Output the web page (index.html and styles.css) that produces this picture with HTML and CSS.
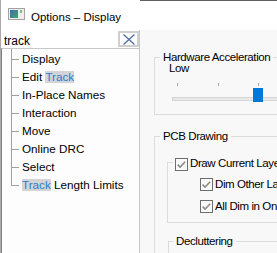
FILE: index.html
```html
<!DOCTYPE html>
<html>
<head>
<meta charset="utf-8">
<link rel="stylesheet" href="styles.css">
</head>
<body>
<div class="window">
  <div class="titlebar">
    <svg class="app-icon" width="17" height="12" viewBox="0 0 17 12">
      <defs>
        <linearGradient id="g" x1="0" y1="0" x2="1" y2="1">
          <stop offset="0" stop-color="#3d6db3"/>
          <stop offset="1" stop-color="#45a66c"/>
        </linearGradient>
      </defs>
      <rect x="0.5" y="0.5" width="16" height="11" fill="#eeeeee" stroke="#a3a3a3"/>
      <rect x="2" y="2" width="8" height="8" fill="url(#g)"/>
      <rect x="12" y="2" width="2" height="3" fill="#7cc07c"/>
    </svg>
    <span class="title">Options – Display</span>
  </div>
  <div class="main">
    <div class="left">
      <div class="search">
        <span class="search-text">track</span>
        <span class="clear">
          <svg width="12" height="11" viewBox="0 0 12 11"><path d="M0.5 0.5 L11.5 10.5 M11.5 0.5 L0.5 10.5" stroke="#4d6fa3" stroke-width="1.3" fill="none"/></svg>
        </span>
      </div>
      <ul class="tree">
        <li>Display</li>
        <li>Edit <mark>Track</mark></li>
        <li>In-Place Names</li>
        <li>Interaction</li>
        <li>Move</li>
        <li>Online DRC</li>
        <li>Select</li>
        <li><mark>Track</mark> Length Limits</li>
      </ul>
    </div>
    <div class="right">
      <fieldset class="group hw">
        <legend>Hardware Acceleration</legend>
        <div class="low">Low</div>
        <div class="ticks"><i></i><i></i><i></i></div>
        <div class="slider"><div class="track"></div><div class="thumb"></div></div>
      </fieldset>
      <fieldset class="group pcb">
        <legend>PCB Drawing</legend>
        <fieldset class="group sub">
          <legend class="check-legend"><span class="check-line">
            <svg class="cb" viewBox="0 0 13 13"><rect x="0.5" y="0.5" width="12" height="12" fill="#fafafa" stroke="#6e6e6e"/><path d="M2.6 6.6 L5.1 9.1 L10.2 3.8" stroke="#8a8a8a" stroke-width="1.5" fill="none"/></svg>
            <span class="cb-label">Draw Current Layer</span></span></legend>
          <div class="row">
            <svg class="cb" viewBox="0 0 13 13"><rect x="0.5" y="0.5" width="12" height="12" fill="#fafafa" stroke="#6e6e6e"/><path d="M2.6 6.6 L5.1 9.1 L10.2 3.8" stroke="#8a8a8a" stroke-width="1.5" fill="none"/></svg>
            <span class="cb-label">Dim Other Layers</span>
          </div>
          <div class="row">
            <svg class="cb" viewBox="0 0 13 13"><rect x="0.5" y="0.5" width="12" height="12" fill="#fafafa" stroke="#6e6e6e"/><path d="M2.6 6.6 L5.1 9.1 L10.2 3.8" stroke="#8a8a8a" stroke-width="1.5" fill="none"/></svg>
            <span class="cb-label">All Dim in One Color</span>
          </div>
        </fieldset>
        <fieldset class="group declutter">
          <legend>Decluttering</legend>
          <div class="declutter-body"></div>
        </fieldset>
      </fieldset>
    </div>
  </div>
</div>
</body>
</html>
```
FILE: styles.css
```css
* { box-sizing: border-box; }

body {
  margin: 0;
  font-family: "Liberation Sans", Arial, sans-serif;
  background: #ffffff;
  color: #000;
}

.window {
  width: 277px;
  height: 253px;
  display: flex;
  flex-direction: column;
  border-left: 1px solid #a9a9a9;
  overflow: hidden;
}

.titlebar {
  height: 30px;
  flex: none;
  display: flex;
  align-items: flex-start;
  background: #ffffff;
  position: relative;
}

.titlebar::after {
  content: "";
  position: absolute;
  left: 139px;
  right: 0;
  top: 0;
  height: 1px;
  background: #606060;
}

.app-icon {
  flex: none;
  margin: 8px 6px 0 7px;
}

.title {
  font-size: 11.5px;
  line-height: 14px;
  margin-top: 10px;
  white-space: nowrap;
}

.main {
  flex: 1;
  display: flex;
  min-height: 0;
}

.left {
  width: 139px;
  flex: none;
  display: flex;
  flex-direction: column;
  border-right: 1px solid #c8c8c8;
  background: #ffffff;
}

.search {
  height: 18px;
  flex: none;
  display: flex;
}

.search-text {
  flex: 1;
  font-size: 12px;
  line-height: 14px;
  padding: 4px 0 0 3px;
}

.clear {
  width: 21px;
  height: 16px;
  margin-top: 1px;
  border: 2px solid #cfcfcf;
  display: flex;
  align-items: center;
  justify-content: center;
  background: #fff;
}

.clear svg { display: block; }

.tree {
  flex: 1;
  margin: 0;
  padding: 1px 0 0;
  list-style: none;
  border-top: 1px solid #c8c8c8;
  border-left: 1px solid #828282;
  background: #fdfdfd;
  font-size: 11.7px;
}

.tree li {
  position: relative;
  height: 18px;
  line-height: 18px;
  padding-left: 20px;
  white-space: nowrap;
}

.tree li::before {
  content: "";
  position: absolute;
  left: 9px;
  top: 9px;
  width: 8px;
  height: 1px;
  background: #a0a0a0;
}

.tree li::after {
  content: "";
  position: absolute;
  left: 9px;
  top: 0;
  bottom: 0;
  width: 1px;
  background: #a0a0a0;
}

.tree li:first-child::after { top: -1px; }
.tree li:last-child::after { bottom: 8px; }

.tree mark {
  display: inline-block;
  line-height: 12px;
  background: #d4d4d4;
  color: #2b7cd3;
}

.right {
  flex: 1;
  min-width: 0;
  background: #f8f8f8;
  overflow: hidden;
  padding-left: 14px;
  font-size: 11.5px;
  letter-spacing: -0.4px;
}

.group {
  margin: 0;
  padding: 0;
  border: 1px solid #dcdcdc;
  min-width: 0;
}

.group > legend {
  padding: 0 3px;
  margin-left: 5px;
  line-height: 13px;
  height: 13px;
  white-space: nowrap;
}

.hw {
  width: 220px;
  margin-top: 21px;
  padding-bottom: 12px;
}

.low {
  margin: -1px 0 0 14px;
  line-height: 10px;
  height: 10px;
}

.ticks {
  display: flex;
  justify-content: space-between;
  width: 82px;
  height: 3px;
  margin: 10px 0 0 22px;
}

.ticks i {
  width: 1px;
  background: #a8a8a8;
}

.slider {
  position: relative;
  height: 14px;
  margin: 2px 0 0 17px;
}

.track {
  position: absolute;
  left: 0;
  right: 0;
  top: 9px;
  height: 4px;
  background: #e7e7e7;
  border: 1px solid #d6d6d6;
}

.thumb {
  position: absolute;
  left: 81px;
  top: 0;
  width: 10px;
  height: 14px;
  background: #0078d7;
}

.pcb {
  width: 240px;
  margin-top: 15px;
}

.sub {
  width: 220px;
  margin: 13px 0 0 12px;
  padding: 5px 0 4px 0;
}

.sub > legend.check-legend {
  padding: 0 2px;
  margin-left: 5px;
}

.check-line {
  display: flex;
  align-items: flex-start;
  height: 13px;
}

.cb {
  width: 13px;
  height: 13px;
  flex: none;
  display: block;
}

.check-line .cb { margin-top: 2px; }

.cb-label {
  margin: 1px 0 0 2px;
  line-height: 13px;
  white-space: nowrap;
}

.row {
  display: flex;
  align-items: flex-start;
  height: 22px;
  margin-left: 32px;
}

.row .cb { margin-top: 4px; }
.row .cb-label { margin-top: 4px; }

.declutter {
  width: 220px;
  margin: 12px 0 0 13px;
}

.declutter > legend { margin-left: 4px; }

.declutter-body { height: 40px; }
```
